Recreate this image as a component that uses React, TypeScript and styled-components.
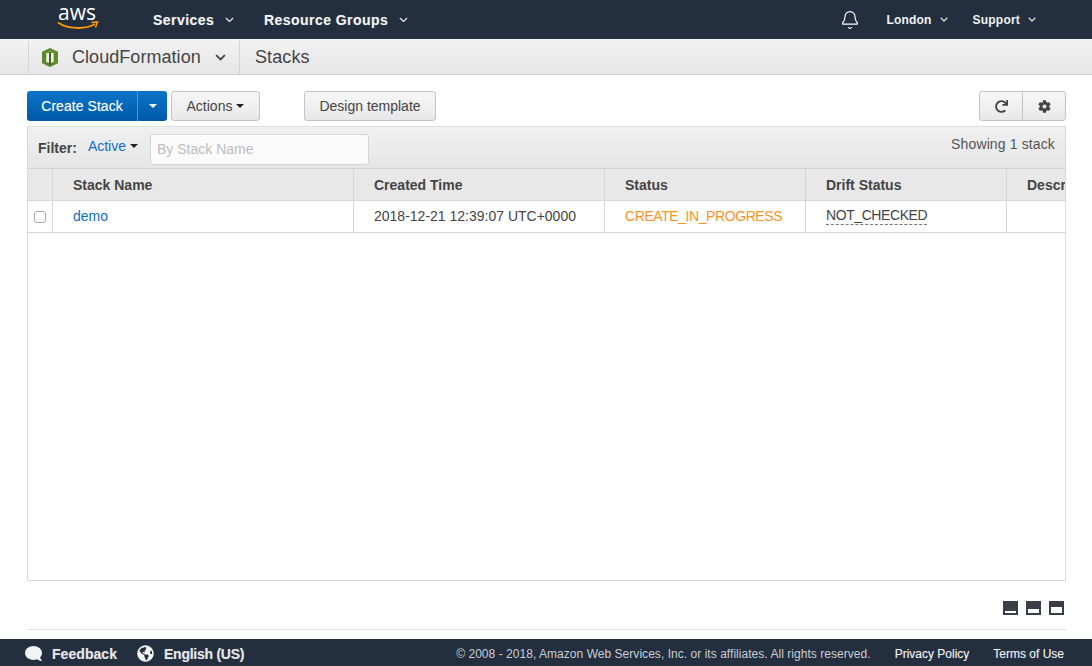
import React from 'react';
import styled, { createGlobalStyle } from 'styled-components';
import { FaCog, FaComment, FaGlobeAmericas, FaRedo } from 'react-icons/fa';
import { Bell } from 'lucide-react';

const GlobalStyle = createGlobalStyle`
  html, body {
    margin: 0;
    padding: 0;
    height: 100%;
    background: #fff;
  }
  body {
    font-family: "Liberation Sans", Arial, sans-serif;
    font-size: 14px;
    color: #444;
    overflow: hidden;
  }
  * {
    box-sizing: border-box;
  }
`;

const Page = styled.div`
  width: 1092px;
  height: 666px;
  display: flex;
  flex-direction: column;
`;

const TopNav = styled.header`
  height: 39px;
  flex: none;
  display: flex;
  align-items: center;
  background: #232f3e;
  color: #f2f3f3;
  padding-left: 57px;
`;

const LogoBox = styled.div`
  width: 96px;
  flex: none;
  height: 39px;
  display: flex;
  flex-direction: column;
`;

const LogoWord = styled.span`
  font-family: "Open Sans", "Liberation Sans", sans-serif;
  font-size: 21px;
  line-height: 24px;
  height: 24px;
  margin-left: 1px;
  margin-bottom: -3px;
  color: #fff;
`;

const Smile = styled.svg`
  width: 42px;
  height: 10px;
  display: block;
`;

const NavMenu = styled.div<{ $width: number }>`
  display: flex;
  align-items: center;
  width: ${(p) => p.$width}px;
  flex: none;
  font-size: 14px;
  font-weight: bold;
  letter-spacing: 0.45px;
  text-shadow: 0 0 1px rgba(255, 255, 255, 0.3);
  svg {
    margin-left: 11px;
  }
`;

const NavRight = styled.div`
  margin-left: auto;
  display: flex;
  align-items: center;
  padding-right: 56px;
`;

const BellIcon = styled(Bell)`
  width: 20px;
  height: 20px;
  margin-right: 26px;
  color: #fff;
  stroke-width: 1.4;
`;

const NavSmall = styled.div<{ $gap: number }>`
  display: flex;
  align-items: center;
  font-size: 12px;
  font-weight: bold;
  letter-spacing: 0.2px;
  margin-right: ${(p) => p.$gap}px;
  svg {
    margin-left: 8px;
  }
`;

const SubBar = styled.div`
  height: 36px;
  flex: none;
  display: flex;
  background: linear-gradient(#f2f2f2, #e6e6e6);
  border-bottom: 1px solid #d0d0d0;
  padding-left: 28px;
`;

const ServiceCell = styled.div`
  width: 212px;
  flex: none;
  margin-top: 2px;
  display: flex;
  align-items: center;
  border-left: 1px solid #d4d4d4;
  border-right: 1px solid #d4d4d4;
  padding-left: 13px;
  font-size: 18px;
  letter-spacing: 0.05px;
  color: #444;
  svg.cf {
    margin-right: 14px;
  }
  svg.chev {
    margin-left: 14px;
    flex: none;
  }
`;

const PageTitle = styled.div`
  padding: 2px 0 0 15px;
  display: flex;
  align-items: center;
  font-size: 18px;
  letter-spacing: 0.1px;
  color: #444;
`;

const Main = styled.main`
  flex: 1;
  display: flex;
  flex-direction: column;
  padding: 16px 26px 0 27px;
  min-height: 0;
`;

const Toolbar = styled.div`
  height: 30px;
  flex: none;
  display: flex;
  align-items: stretch;
`;

const PrimaryGroup = styled.div`
  display: flex;
  width: 140px;
  border-radius: 3px;
  overflow: hidden;
  background: linear-gradient(#0a74c8, #0059a8);
  color: #fff;
  margin-right: 4px;
`;

const PrimaryMain = styled.div`
  width: 111px;
  display: flex;
  align-items: center;
  justify-content: center;
  border-right: 1px solid #4f97d3;
  letter-spacing: 0.05px;
  text-shadow: 0 0 1px rgba(255, 255, 255, 0.4);
`;

const PrimaryCaret = styled.div`
  flex: 1;
  display: flex;
  align-items: center;
  justify-content: center;
`;

const Caret = styled.span<{ $color: string }>`
  display: inline-block;
  width: 0;
  height: 0;
  border-left: 4px solid transparent;
  border-right: 4px solid transparent;
  border-top: 4px solid ${(p) => p.$color};
`;

const Button = styled.div<{ $width: number; $mr?: number }>`
  width: ${(p) => p.$width}px;
  margin-right: ${(p) => p.$mr ?? 0}px;
  display: flex;
  align-items: center;
  justify-content: center;
  gap: 4px;
  border: 1px solid #c4c4c4;
  border-radius: 3px;
  background: linear-gradient(#f7f7f7, #e8e8e8);
  color: #444;
`;

const IconGroup = styled.div`
  margin-left: auto;
  width: 87px;
  display: flex;
  border: 1px solid #c4c4c4;
  border-radius: 3px;
  background: linear-gradient(#f7f7f7, #e8e8e8);
`;

const IconCell = styled.div<{ $divided?: boolean }>`
  flex: 1;
  display: flex;
  align-items: center;
  justify-content: center;
  font-size: 13px;
  color: #444;
  border-right: ${(p) => (p.$divided ? '1px solid #c4c4c4' : 'none')};
`;

const TablePanel = styled.section`
  margin-top: 5px;
  height: 455px;
  flex: none;
  border: 1px solid #d8d8d8;
  border-top-color: #e0e0e0;
  overflow: hidden;
`;

const FilterBar = styled.div`
  height: 42px;
  display: flex;
  align-items: flex-start;
  background: linear-gradient(#f0f0f0, #e6e6e6);
  border-bottom: 1px solid #d0d0d0;
  padding: 7px 10px 0 10px;
`;

const FilterLabel = styled.span`
  font-weight: bold;
  line-height: 29px;
  color: #444;
`;

const FilterDrop = styled.span`
  display: flex;
  align-items: center;
  gap: 4px;
  color: #0f6fc6;
  margin-left: 11px;
  margin-right: 12px;
  line-height: 24px;
`;

const SearchBox = styled.div`
  width: 219px;
  height: 31px;
  border: 1px solid #d5d5d5;
  border-radius: 3px;
  background: #fbfbfb;
  color: #bbb;
  padding-left: 6px;
  line-height: 29px;
`;

const ShowingCount = styled.span`
  margin-left: auto;
  line-height: 21px;
  letter-spacing: 0.13px;
  color: #555;
`;

const Row = styled.div<{ $head?: boolean }>`
  display: grid;
  grid-template-columns: 25px 301px 251px 201px 201px 80px;
  width: 1060px;
  height: 32px;
  background: ${(p) => (p.$head ? '#e8e8e8' : '#fff')};
  border-bottom: 1px solid #d5d5d5;
  font-weight: ${(p) => (p.$head ? 'bold' : 'normal')};
  color: #444;
`;

const Cell = styled.div<{ $color?: string }>`
  display: flex;
  align-items: center;
  padding-left: 20px;
  border-right: 1px solid #d5d5d5;
  white-space: nowrap;
  overflow: hidden;
  color: ${(p) => p.$color ?? 'inherit'};
`;

const BodyCell = styled(Cell)`
  padding-bottom: 2px;
`;

const CapsText = styled.span`
  letter-spacing: -0.42px;
`;

const CheckCell = styled.div`
  display: flex;
  align-items: center;
  justify-content: center;
  border-right: 1px solid #d5d5d5;
`;

const CheckBox = styled.span`
  width: 12px;
  height: 12px;
  margin-top: 1px;
  border: 1px solid #a6a6a6;
  border-radius: 3px;
  background: #fff;
`;

const Dashed = styled(CapsText)`
  border-bottom: 1px dashed #777;
  line-height: 17px;
`;

const ViewIcons = styled.div`
  display: flex;
  justify-content: flex-end;
  gap: 8px;
  margin-top: 20px;
  padding-right: 2px;
`;

const ViewIcon = styled.div<{ $fill: number }>`
  width: 15px;
  height: 14px;
  background: #3a3f46;
  display: flex;
  align-items: flex-end;
  padding: 0 2px 2px;
  &::after {
    content: '';
    display: block;
    width: 100%;
    height: ${(p) => p.$fill}px;
    background: #fff;
  }
`;

const Divider = styled.div`
  margin-top: 14px;
  height: 1px;
  background: #ddd;
`;

const Footer = styled.footer`
  height: 27px;
  flex: none;
  margin-top: 9px;
  display: flex;
  align-items: center;
  background: #232f3e;
  color: #e6e8ea;
  padding: 2px 28px 0 25px;
  font-size: 14px;
`;

const FooterItem = styled.div<{ $gap: number; $tight?: boolean }>`
  display: flex;
  align-items: center;
  font-weight: bold;
  margin-right: ${(p) => p.$gap}px;
  letter-spacing: ${(p) => (p.$tight ? '-0.25px' : '0.05px')};
  text-shadow: 0 0 1px rgba(255, 255, 255, 0.3);
  svg {
    margin-right: 10px;
    font-size: 17px;
    color: #f2f3f3;
  }
`;

const BubbleIcon = styled(FaComment)`
  transform: scaleX(-1);
`;

const FooterRight = styled.div`
  margin-left: auto;
  display: flex;
  align-items: center;
  font-size: 12px;
  color: #c9ced3;
`;

const CopyrightText = styled.span`
  letter-spacing: 0.04px;
`;

const FooterLink = styled.span`
  margin-left: 24px;
  color: #f0f1f2;
  text-shadow: 0 0 1px rgba(255, 255, 255, 0.3);
`;

const Chevron: React.FC<{ size?: number; color: string }> = ({ size = 9, color }) => (
  <svg className="chev" width={size} height={size * 0.6} viewBox="0 0 10 6" fill="none">
    <path d="M1 1l4 4 4-4" stroke={color} strokeWidth="1.6" />
  </svg>
);

const CloudFormationIcon = () => (
  <svg className="cf" width="16" height="19" viewBox="0 0 16 19">
    <path d="M8 0L16 3.8V15.2L8 19L0 15.2V3.8Z" fill="#5e8a2e" />
    <path d="M3.5 4.5L8 2.6L12.5 4.5L8 3.8Z" fill="#7fa24f" />
    <path d="M4.3 5H7V14.8L4.3 14Z" fill="#f1f3e6" />
    <path d="M9 5H11.7V14L9 14.8Z" fill="#f1f3e6" />
    <path d="M7 4.5H9V17H7Z" fill="#46691f" />
  </svg>
);

const columns = ['Stack Name', 'Created Time', 'Status', 'Drift Status', 'Description'];

const App: React.FC = () => (
  <Page>
    <GlobalStyle />
    <TopNav>
      <LogoBox>
        <LogoWord>aws</LogoWord>
        <Smile viewBox="0 0 42 10">
          <path d="M1 1.5C10 8 28 9 38 3" fill="none" stroke="#f90" strokeWidth="1.8" />
          <path d="M34.5 1.5L40.5 1L38.5 6.5" fill="none" stroke="#f90" strokeWidth="1.6" />
        </Smile>
      </LogoBox>
      <NavMenu $width={111}>
        Services
        <Chevron color="#d5d9dc" />
      </NavMenu>
      <NavMenu $width={160}>
        Resource Groups
        <Chevron color="#d5d9dc" />
      </NavMenu>
      <NavRight>
        <BellIcon />
        <NavSmall $gap={25}>
          London
          <Chevron size={8} color="#d5d9dc" />
        </NavSmall>
        <NavSmall $gap={0}>
          Support
          <Chevron size={8} color="#d5d9dc" />
        </NavSmall>
      </NavRight>
    </TopNav>
    <SubBar>
      <ServiceCell>
        <CloudFormationIcon />
        CloudFormation
        <Chevron size={11} color="#444" />
      </ServiceCell>
      <PageTitle>Stacks</PageTitle>
    </SubBar>
    <Main>
      <Toolbar>
        <PrimaryGroup>
          <PrimaryMain>Create Stack</PrimaryMain>
          <PrimaryCaret>
            <Caret $color="#fff" />
          </PrimaryCaret>
        </PrimaryGroup>
        <Button $width={89} $mr={44}>
          Actions
          <Caret $color="#222" />
        </Button>
        <Button $width={132}>Design template</Button>
        <IconGroup>
          <IconCell $divided>
            <FaRedo />
          </IconCell>
          <IconCell>
            <FaCog />
          </IconCell>
        </IconGroup>
      </Toolbar>
      <TablePanel>
        <FilterBar>
          <FilterLabel>Filter:</FilterLabel>
          <FilterDrop>
            Active
            <Caret $color="#222" />
          </FilterDrop>
          <SearchBox>By Stack Name</SearchBox>
          <ShowingCount>Showing 1 stack</ShowingCount>
        </FilterBar>
        <Row $head>
          <CheckCell />
          {columns.map((c) => (
            <Cell key={c}>{c}</Cell>
          ))}
        </Row>
        <Row>
          <CheckCell>
            <CheckBox />
          </CheckCell>
          <BodyCell $color="#0f6fc6">demo</BodyCell>
          <BodyCell>2018-12-21 12:39:07 UTC+0000</BodyCell>
          <BodyCell $color="#f7931e">
            <CapsText>CREATE_IN_PROGRESS</CapsText>
          </BodyCell>
          <BodyCell>
            <Dashed>NOT_CHECKED</Dashed>
          </BodyCell>
          <BodyCell />
        </Row>
      </TablePanel>
      <ViewIcons>
        <ViewIcon $fill={2} />
        <ViewIcon $fill={4} />
        <ViewIcon $fill={6} />
      </ViewIcons>
      <Divider />
    </Main>
    <Footer>
      <FooterItem $gap={20}>
        <BubbleIcon />
        Feedback
      </FooterItem>
      <FooterItem $gap={0} $tight>
        <FaGlobeAmericas />
        English (US)
      </FooterItem>
      <FooterRight>
        <CopyrightText>
          © 2008 - 2018, Amazon Web Services, Inc. or its affiliates. All rights reserved.
        </CopyrightText>
        <FooterLink>Privacy Policy</FooterLink>
        <FooterLink>Terms of Use</FooterLink>
      </FooterRight>
    </Footer>
  </Page>
);

export default App;
